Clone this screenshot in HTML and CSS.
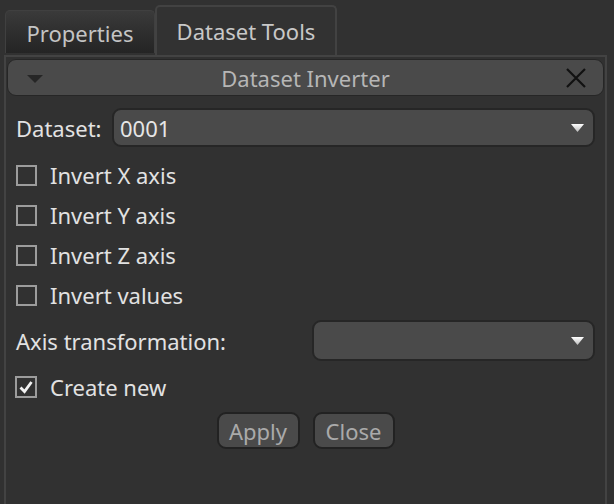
FILE: index.html
```html
<!DOCTYPE html>
<html>
<head>
<meta charset="utf-8">
<link rel="stylesheet" href="styles.css">
</head>
<body>
<div class="tabs">
  <div class="tab">Properties</div>
  <div class="tab active">Dataset Tools</div>
</div>
<div class="pane">
  <div class="header">
    <svg class="caret" width="16" height="8" viewBox="0 0 16 8"><path d="M0 0 H16 L8 8 Z" fill="#262626"/></svg>
    <span class="title">Dataset Inverter</span>
    <svg class="close" width="22" height="22" viewBox="0 0 22 22"><path d="M2 2 L20 20 M20 2 L2 20" stroke="#111" stroke-width="2.2"/></svg>
  </div>
  <div class="form">
    <div class="row dataset-row">
      <span class="label">Dataset:</span>
      <div class="combo wide">
        <span class="value">0001</span>
        <svg class="arrow" width="13" height="8" viewBox="0 0 13 8"><defs><linearGradient id="g1" x1="0" y1="0" x2="0" y2="1"><stop offset="0" stop-color="#fff"/><stop offset="1" stop-color="#bbb"/></linearGradient></defs><path d="M0 0 H13 L6.5 8 Z" fill="url(#g1)"/></svg>
      </div>
    </div>
    <div class="row check-row"><span class="box"></span><span class="label">Invert X axis</span></div>
    <div class="row check-row"><span class="box"></span><span class="label">Invert Y axis</span></div>
    <div class="row check-row"><span class="box"></span><span class="label">Invert Z axis</span></div>
    <div class="row check-row"><span class="box"></span><span class="label">Invert values</span></div>
    <div class="row axis-row">
      <span class="label">Axis transformation:</span>
      <div class="combo axis">
        <svg class="arrow" width="13" height="8" viewBox="0 0 13 8"><defs><linearGradient id="g2" x1="0" y1="0" x2="0" y2="1"><stop offset="0" stop-color="#fff"/><stop offset="1" stop-color="#bbb"/></linearGradient></defs><path d="M0 0 H13 L6.5 8 Z" fill="url(#g2)"/></svg>
      </div>
    </div>
    <div class="row check-row create">
      <span class="box checked"><svg width="16" height="16" viewBox="0 0 16 16"><path d="M2.5 8.5 L6.5 12.5 L13.5 3" fill="none" stroke="#f2f2f2" stroke-width="2.8"/></svg></span>
      <span class="label">Create new</span>
    </div>
    <div class="buttons">
      <div class="btn apply">Apply</div>
      <div class="btn close-btn">Close</div>
    </div>
  </div>
</div>
</body>
</html>
```
FILE: styles.css
```css
html, body {
  margin: 0;
  padding: 0;
  background: #313131;
  height: 504px;
  overflow: hidden;
}
body {
  font-family: "Noto Sans", "Open Sans", sans-serif;
  font-size: 22px;
  color: #e2e2e2;
}
.tabs {
  display: flex;
  align-items: flex-end;
  height: 55px;
  padding-left: 5px;
  box-sizing: border-box;
}
.tab {
  box-sizing: border-box;
  width: 150px;
  height: 43px;
  margin-bottom: 2px;
  border: 1px solid #404040;
  border-bottom: none;
  border-radius: 5px 5px 0 0;
  background: linear-gradient(#3a3a3a, #242424);
  color: #c4c4c4;
  display: flex;
  align-items: center;
  justify-content: center;
  padding-top: 2px;
}
.tab.active {
  width: 182px;
  height: 50px;
  margin-bottom: 0;
  background: #323232;
  border: 2px solid #424242;
  border-bottom: none;
  color: #c8c8c8;
  padding-top: 0;
}
.pane {
  box-sizing: border-box;
  margin: 0 7px 0 4px;
  height: 460px;
  border: 2px solid #434343;
  background: #313131;
  padding: 2px 1px 0 1px;
}
.header {
  box-sizing: border-box;
  height: 37px;
  border: 1px solid #262626;
  border-radius: 9px;
  background: #4a4a4a;
  display: flex;
  align-items: center;
  padding: 0 16px 0 19px;
  color: #b6b6b6;
}
.header .title {
  flex: 1;
  text-align: center;
  padding-left: 3px;
}
.caret {
  margin-top: 2px;
}
.form {
  padding: 12px 9px 0 9px;
  display: flex;
  flex-direction: column;
}
.row {
  display: flex;
  align-items: center;
}
.dataset-row {
  height: 39px;
}
.dataset-row .label {
  width: 96px;
  margin-left: -1px;
  padding-left: 1px;
}
.combo {
  box-sizing: border-box;
  height: 39px;
  border: 2px solid #262626;
  border-radius: 9px;
  background: #4a4a4a;
  display: flex;
  align-items: center;
  padding: 0 9px 0 6px;
}
.combo.wide {
  flex: 1;
}
.combo .value {
  flex: 1;
  color: #e6e6e6;
}
.combo.axis {
  width: 283px;
  margin-left: auto;
  justify-content: flex-end;
  height: 41px;
}
.check-row {
  height: 40px;
}
.dataset-row + .check-row {
  margin-top: 8px;
}
.box {
  box-sizing: border-box;
  width: 21px;
  height: 21px;
  border: 2px solid #9c9c9c;
  margin-left: 0;
  margin-right: 13px;
  display: flex;
  align-items: center;
  justify-content: center;
}
.axis-row {
  height: 41px;
  margin-top: 5px;
}
.create {
  margin-top: 2px;
  height: 48px;
}
.create .box {
  width: 22px;
  height: 22px;
  margin-left: -1px;
  margin-right: 13px;
}
.buttons {
  display: flex;
  justify-content: center;
  gap: 13px;
  margin-top: 1px;
}
.btn {
  box-sizing: border-box;
  height: 37px;
  border: 2px solid #222;
  border-radius: 9px;
  background: #4a4a4a;
  color: #aaaaaa;
  display: flex;
  align-items: center;
  justify-content: center;
}
.apply { width: 83px; }
.close-btn { width: 82px; }
```
